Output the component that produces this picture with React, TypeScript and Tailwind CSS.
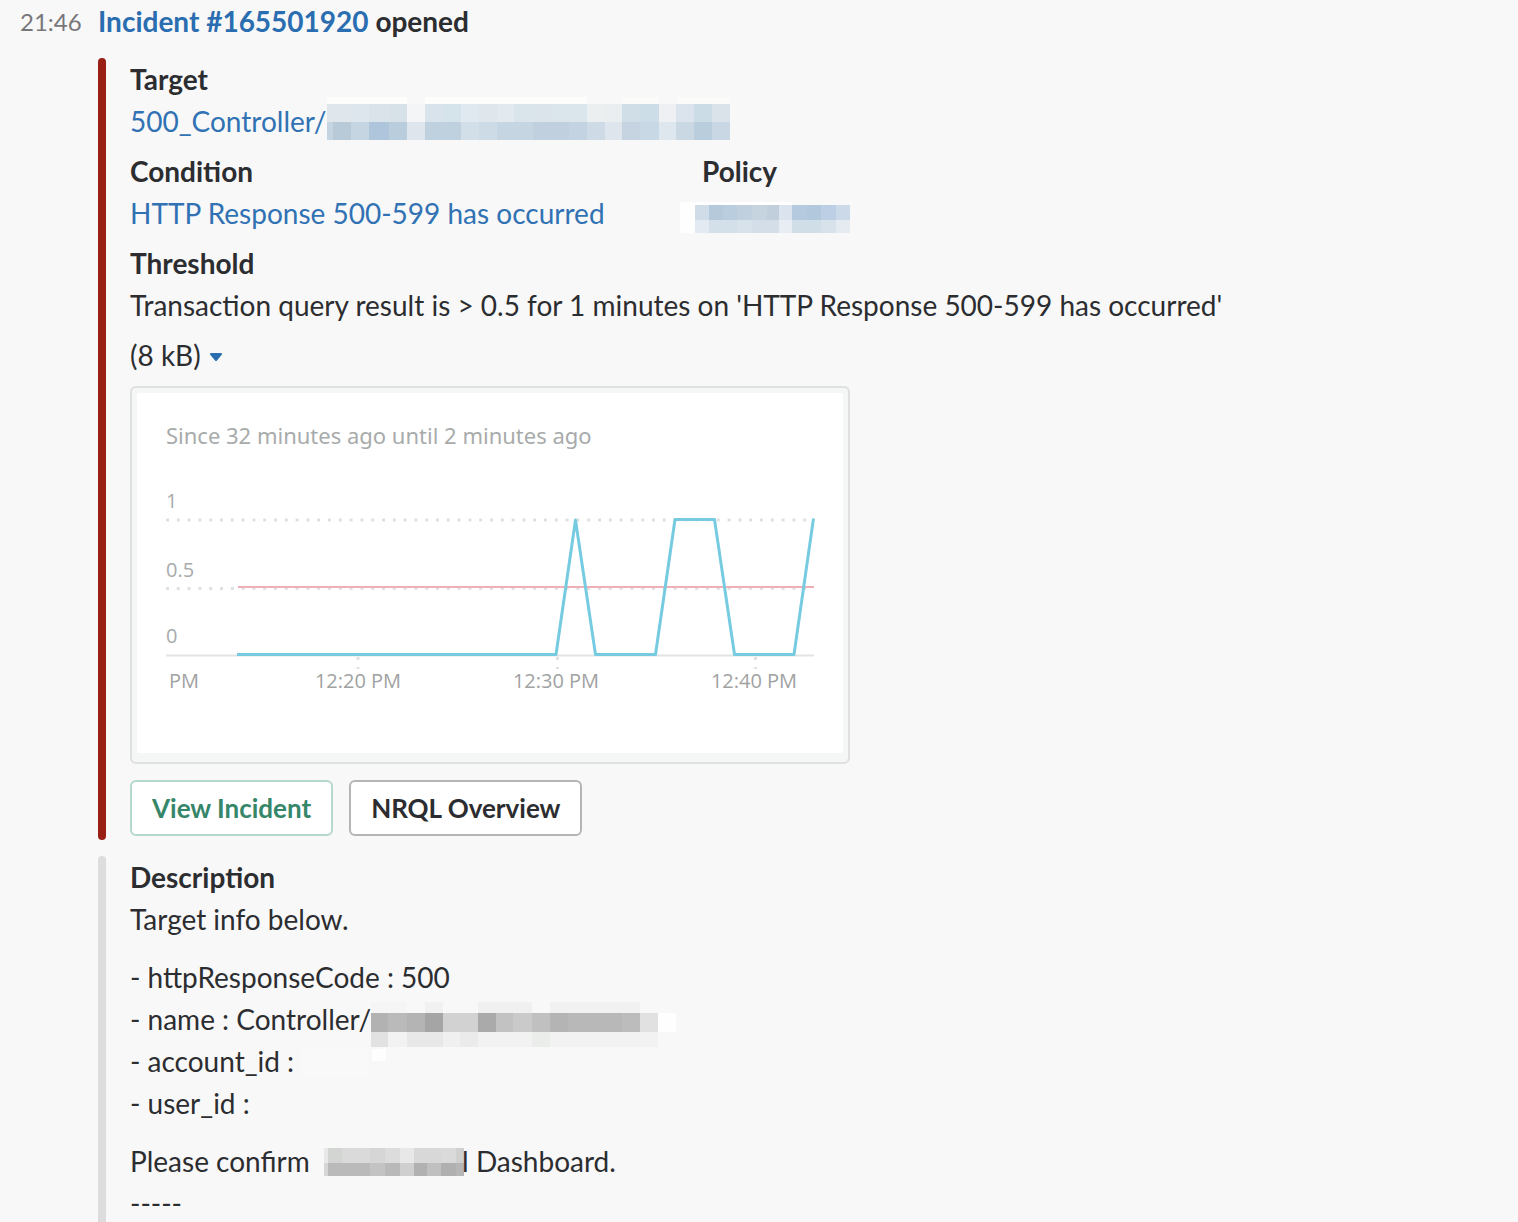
import type { ReactNode } from 'react';

type MosaicRow = {
  y: number;
  h: number;
  // [x, width, colour]
  cells: [number, number, string][];
};

const targetMosaic: MosaicRow[] = [
  {
    y: -3,
    h: 7,
    cells: [
      [0, 80, '#fdfdfb'],
      [98, 162, '#fdfdfb'],
      [296, 36, '#fbfbf9'],
      [350, 53, '#fbfbf9'],
    ],
  },
  {
    y: 4,
    h: 18,
    cells: [
      [0, 24, '#dfe6ec'],
      [24, 18, '#dde6ec'],
      [42, 20, '#dae3ea'],
      [62, 18, '#d6e2e8'],
      [80, 18, '#f4f5f6'],
      [98, 18, '#d9e3eb'],
      [116, 18, '#d5e3ea'],
      [134, 18, '#e0e9ef'],
      [152, 18, '#dfe7ed'],
      [170, 17, '#e2eaef'],
      [187, 19, '#dae4eb'],
      [206, 18, '#dbe4ea'],
      [224, 36, '#dae5ec'],
      [260, 18, '#ebefef'],
      [278, 17, '#ebeef1'],
      [295, 18, '#d0dee8'],
      [313, 19, '#cddde8'],
      [332, 17, '#eef0f4'],
      [349, 18, '#dbe4ec'],
      [367, 18, '#cbdce6'],
      [385, 18, '#dbe3ea'],
    ],
  },
  {
    y: 22,
    h: 18,
    cells: [
      [0, 6, '#c4d4e0'],
      [6, 18, '#b8c9d8'],
      [24, 18, '#c5d5e1'],
      [42, 20, '#afc5db'],
      [62, 18, '#bacddd'],
      [80, 18, '#dee5ed'],
      [98, 36, '#bfd0df'],
      [134, 18, '#d2dee8'],
      [152, 18, '#cddbe6'],
      [170, 36, '#c5d5e2'],
      [206, 36, '#c0d0df'],
      [242, 18, '#c3d3e1'],
      [260, 18, '#cedae5'],
      [278, 17, '#dee5ec'],
      [295, 18, '#c5d4e0'],
      [313, 19, '#c8d8e4'],
      [332, 17, '#dfe7ee'],
      [349, 18, '#cad8e3'],
      [367, 18, '#b9cddd'],
      [385, 18, '#c9d7e4'],
    ],
  },
];

const policyMosaic: MosaicRow[] = [
  { y: 10, h: 3, cells: [[-22, 112, '#fefefe']] },
  {
    y: 13,
    h: 15,
    cells: [
      [-22, 15, '#fefefe'],
      [-7, 14, '#d0dde8'],
      [7, 14, '#b5c9da'],
      [21, 14, '#bacddf'],
      [35, 15, '#c0d0df'],
      [50, 15, '#c6d4e0'],
      [65, 12, '#c0cfdb'],
      [77, 13, '#dbe4ee'],
      [90, 15, '#b5c9df'],
      [105, 14, '#b2c8dc'],
      [119, 15, '#bccfe4'],
      [134, 14, '#cbd9e8'],
    ],
  },
  {
    y: 28,
    h: 13,
    cells: [
      [-22, 15, '#fefefe'],
      [-7, 14, '#e4eaf1'],
      [7, 28, '#d3dfe9'],
      [35, 15, '#d7e2eb'],
      [50, 27, '#d3dee8'],
      [77, 13, '#e8edf3'],
      [90, 29, '#d0dee8'],
      [119, 15, '#d8e2eb'],
      [134, 14, '#e6ebf2'],
    ],
  },
];

const nameMosaic: MosaicRow[] = [
  {
    y: 4,
    h: 11,
    cells: [
      [0, 35, '#f5f5f5'],
      [54, 18, '#f1f1f1'],
      [107, 54, '#f0f0f0'],
      [179, 90, '#f1f1f1'],
    ],
  },
  {
    y: 15,
    h: 19,
    cells: [
      [0, 17, '#b2b2b2'],
      [17, 19, '#bababa'],
      [36, 18, '#b4b4b4'],
      [54, 18, '#a5a5a5'],
      [72, 35, '#d2d2d2'],
      [107, 18, '#aaaaaa'],
      [125, 17, '#c2c2c2'],
      [142, 19, '#cacaca'],
      [161, 18, '#c0c0c0'],
      [179, 18, '#b4b4b4'],
      [197, 54, '#b8b8b8'],
      [251, 18, '#bcbcbc'],
      [269, 18, '#e1e1e1'],
      [287, 18, '#fefefe'],
    ],
  },
  {
    y: 34,
    h: 15,
    cells: [
      [0, 17, '#e2e2e2'],
      [17, 19, '#f2f2f2'],
      [36, 36, '#e8e8e8'],
      [72, 17, '#f0f0f0'],
      [89, 18, '#ebebeb'],
      [107, 54, '#f2f2f2'],
      [161, 18, '#ebedeb'],
      [179, 108, '#f2f2f2'],
    ],
  },
];

const accountMosaic: MosaicRow[] = [
  {
    y: 7,
    h: 30,
    cells: [[8, 66, '#f9f9f9']],
  },
  {
    y: 9,
    h: 12,
    cells: [[78, 14, '#fefefe']],
  },
];

const dashboardMosaic: MosaicRow[] = [
  {
    y: 8,
    h: 15,
    cells: [
      [0, 4, '#e8e8e8'],
      [4, 14, '#d3d5d2'],
      [18, 28, '#dadada'],
      [46, 15, '#d6d6d6'],
      [61, 15, '#dcdcdc'],
      [76, 14, '#e8e8e8'],
      [90, 27, '#d8d8d8'],
      [117, 15, '#dadada'],
      [132, 8, '#d0d0d0'],
    ],
  },
  {
    y: 23,
    h: 13,
    cells: [
      [0, 4, '#d6d6d6'],
      [4, 42, '#bababa'],
      [46, 15, '#c3c3c3'],
      [61, 15, '#b9b9b9'],
      [76, 14, '#cfcfcf'],
      [90, 13, '#b1b1b1'],
      [103, 14, '#c0c0c0'],
      [117, 15, '#b0b0b0'],
      [132, 8, '#b6b6b6'],
    ],
  },
];

// Pixelated block that hides private values
function Mosaic({ rows, width }: { rows: MosaicRow[]; width: number }) {
  return (
    <svg
      width={width}
      height={42}
      className="shrink-0 overflow-visible"
      shapeRendering="crispEdges"
      aria-hidden="true"
    >
      {rows.map((row) =>
        row.cells.map(([x, w, fill]) => (
          <rect key={`${row.y}-${x}`} x={x} y={row.y} width={w} height={row.h} fill={fill} />
        ))
      )}
    </svg>
  );
}

function Field({ title, children }: { title: string; children?: ReactNode }) {
  return (
    <div>
      <h3 className="font-bold">{title}</h3>
      <div className="flex h-[42px] whitespace-pre">{children}</div>
    </div>
  );
}

function ResponseChart() {
  return (
    <svg
      viewBox="0 0 706 360"
      className="block w-full rounded-xs bg-white font-['Open_Sans',sans-serif]"
      role="img"
      aria-label="Response errors over time"
    >
      <text x="29" y="51" fontSize="22" fill="#a8abab" className="font-['Noto_Sans',sans-serif]">
        Since 32 minutes ago until 2 minutes ago
      </text>

      {/* grid */}
      <g stroke="#dfe1e1" strokeWidth="3" strokeDasharray="3 7.8">
        <path d="M29 127H677" />
        <path d="M29 195.500H677" />
      </g>
      <path d="M29 262.500H677" stroke="#e2e4e4" strokeWidth="2" />
      <g stroke="#e0e3e3" strokeWidth="3" strokeDasharray="3 7">
        <path d="M221 264V276" />
        <path d="M420.500 264V276" />
        <path d="M618.500 264V276" />
      </g>

      <g fontSize="20" fill="#a8abab">
        <text x="29" y="115">1</text>
        <text x="29" y="184">0.5</text>
        <text x="29" y="250">0</text>
      </g>
      <g fontSize="20" fill="#9fa2a2">
        <text x="32" y="295">PM</text>
        <text x="221" y="295" textAnchor="middle">12:20 PM</text>
        <text x="419" y="295" textAnchor="middle">12:30 PM</text>
        <text x="617" y="295" textAnchor="middle">12:40 PM</text>
      </g>

      {/* threshold */}
      <path d="M101 194H677" stroke="#eeb0b6" strokeWidth="2" />
      {/* errors */}
      <path
        d="M100 261.500H419L438.500 127L458.500 261.500H518.500L538 126.500H577.500L597.500 261.500H657L676.500 125.500"
        fill="none"
        stroke="#76cbe1"
        strokeWidth="3"
        strokeLinejoin="round"
      />
    </svg>
  );
}

export default function App() {
  return (
    <main className="h-screen overflow-hidden bg-[#f8f8f8] font-[Lato,'Liberation_Sans',sans-serif] text-[28px] leading-[42px] text-[#2c2d30]">
      <div className="flex">
        <time className="w-[98px] shrink-0 pl-5 text-2xl leading-[44px] text-[#77777a]">21:46</time>

        <div className="min-w-0 flex-1">
          <h2 className="font-bold">
            <a href="#incident" className="text-[#2a6db0]">
              Incident #165501920
            </a>{' '}
            opened
          </h2>

          {/* Incident attachment */}
          <section className="mt-4 flex gap-6">
            <div className="w-2 shrink-0 rounded-full bg-[#991f14]" />
            <div className="min-w-0 flex-1 pb-1">
              <div className="grid max-w-[1144px] grid-cols-2 gap-y-2">
                <div className="col-span-2">
                  <Field title="Target">
                    <a href="#target" className="flex text-[#3072b3]">
                      500_Controller/
                      <Mosaic rows={targetMosaic} width={403} />
                    </a>
                  </Field>
                </div>
                <Field title="Condition">
                  <a href="#condition" className="text-[#3072b3]">
                    HTTP Response 500-599 has occurred
                  </a>
                </Field>
                <Field title="Policy">
                  <Mosaic rows={policyMosaic} width={148} />
                </Field>
                <div className="col-span-2">
                  <Field title="Threshold">
                    Transaction query result is &gt; 0.5 for 1 minutes on 'HTTP Response 500-599 has
                    occurred'
                  </Field>
                </div>
              </div>

              <button type="button" className="mt-2 flex items-center gap-2">
                (8 kB)
                <svg width="14" height="10" viewBox="0 0 14 10" className="mt-1" aria-hidden="true">
                  <path
                    d="M2 2H12L7 8Z"
                    fill="#2a6db0"
                    stroke="#2a6db0"
                    strokeWidth="2"
                    strokeLinejoin="round"
                  />
                </svg>
              </button>

              <div className="mt-[10px] max-w-[720px] rounded-md border-2 border-[#dfe0e0] bg-[#f5f6f6] px-[5px] pt-[5px] pb-[9px]">
                <ResponseChart />
              </div>

              <div className="mt-4 flex gap-4">
                <button
                  type="button"
                  className="h-14 rounded-md border-2 border-[#b5d8ca] bg-white px-5 text-[26px] font-bold text-[#36866a]"
                >
                  View Incident
                </button>
                <button
                  type="button"
                  className="h-14 rounded-md border-2 border-[#b5b5b6] bg-white px-5 text-[26px] font-bold"
                >
                  NRQL Overview
                </button>
              </div>
            </div>
          </section>

          {/* Description attachment */}
          <section className="mt-4 flex gap-6">
            <div className="w-2 shrink-0 rounded-t-full bg-[#dddddd]" />
            <div className="min-w-0 flex-1">
              <h3 className="font-bold">Description</h3>
              <p>Target info below.</p>
              <ul className="mt-4">
                <li>- httpResponseCode : 500</li>
                <li className="flex h-[42px]">
                  - name : Controller/
                  <Mosaic rows={nameMosaic} width={305} />
                </li>
                <li className="flex h-[42px]">
                  - account_id :
                  <Mosaic rows={accountMosaic} width={92} />
                </li>
                <li>- user_id :</li>
              </ul>
              <p className="mt-4 flex h-[42px] whitespace-pre">
                {'Please confirm  '}
                <Mosaic rows={dashboardMosaic} width={138} />
                l Dashboard.
              </p>
              <p>-----</p>
            </div>
          </section>
        </div>
      </div>
    </main>
  );
}
